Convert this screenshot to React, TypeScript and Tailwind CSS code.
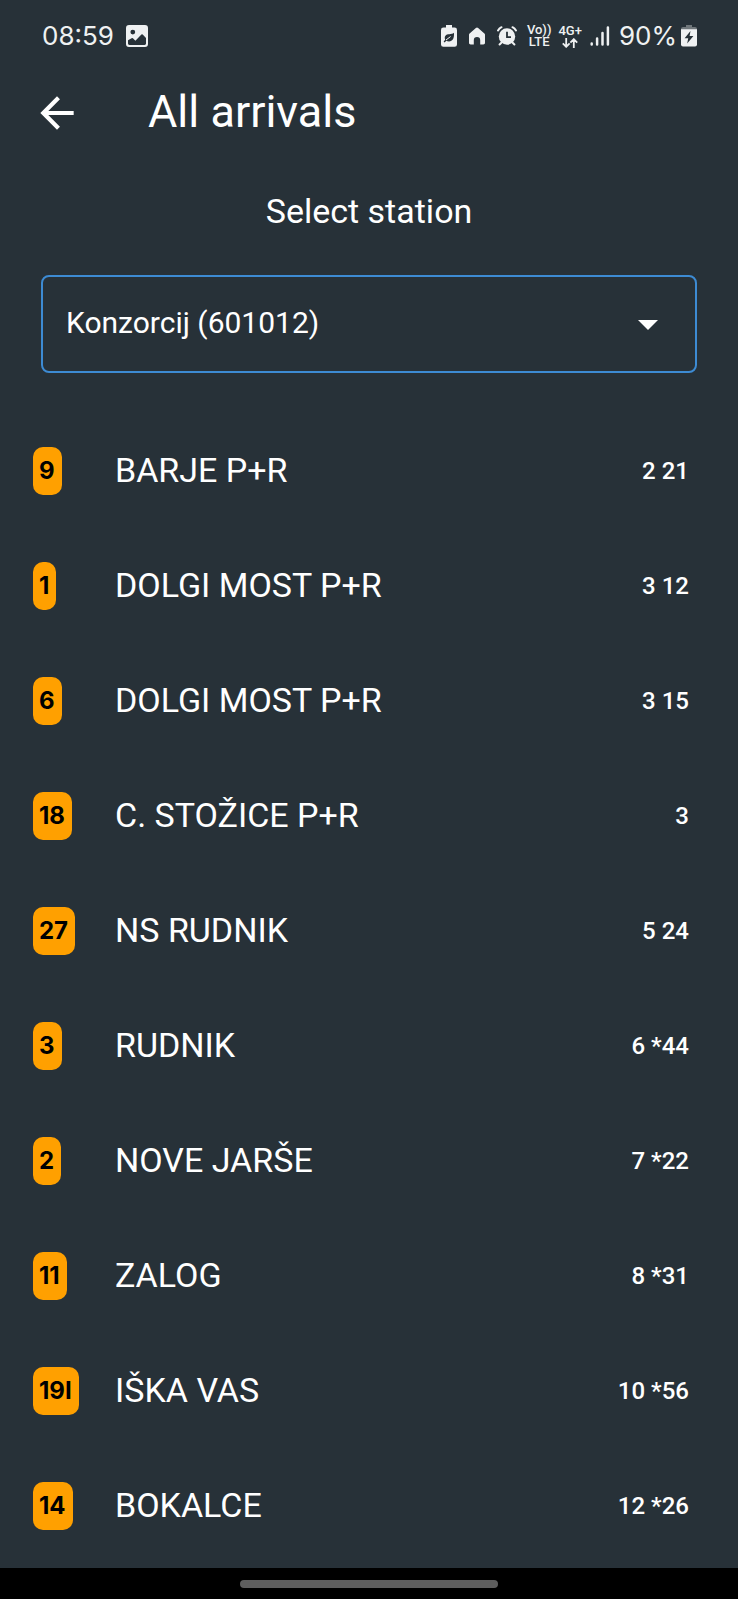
import { MdArrowBack, MdArrowDropDown } from "react-icons/md";

type Arrival = { line: string; destination: string; minutes: string };

const arrivals: Arrival[] = [
  { line: "9", destination: "BARJE P+R", minutes: "2 21" },
  { line: "1", destination: "DOLGI MOST P+R", minutes: "3 12" },
  { line: "6", destination: "DOLGI MOST P+R", minutes: "3 15" },
  { line: "18", destination: "C. STOŽICE P+R", minutes: "3" },
  { line: "27", destination: "NS RUDNIK", minutes: "5 24" },
  { line: "3", destination: "RUDNIK", minutes: "6 *44" },
  { line: "2", destination: "NOVE JARŠE", minutes: "7 *22" },
  { line: "11", destination: "ZALOG", minutes: "8 *31" },
  { line: "19I", destination: "IŠKA VAS", minutes: "10 *56" },
  { line: "14", destination: "BOKALCE", minutes: "12 *26" },
];

function PictureIcon() {
  return (
    <svg viewBox="0 0 22 22" className="size-[22px]" aria-hidden="true">
      <path
        fill="currentColor"
        fillRule="evenodd"
        d="M3 0h16a3 3 0 0 1 3 3v16a3 3 0 0 1-3 3H3a3 3 0 0 1-3-3V3a3 3 0 0 1 3-3ZM6.8 4.7a2.4 2.4 0 1 0 0 4.8 2.4 2.4 0 0 0 0-4.8ZM2 15.2v3.3c0 .8.6 1.4 1.4 1.4h15.2c.8 0 1.4-.6 1.4-1.4V13l-3.3-3.4a.9.9 0 0 0-1.3 0l-6 6.1-2.5-2.4a.9.9 0 0 0-1.3 0Z"
      />
    </svg>
  );
}

function BatteryLeafIcon() {
  return (
    <svg viewBox="0 0 16 22" className="h-[22px] w-4" aria-hidden="true">
      <path
        fill="currentColor"
        d="M5 0h6v2.6h2.6A2.4 2.4 0 0 1 16 5v14.4a2.4 2.4 0 0 1-2.4 2.4H2.4A2.4 2.4 0 0 1 0 19.4V5a2.4 2.4 0 0 1 2.4-2.4H5Z"
      />
      <path
        fill="#273138"
        d="M13 7.8c.3 5.4-1.3 8.7-5 8.7-1.1 0-2-.3-2.7-.8l-1.700 1.800-1-1 1.600-1.700C2.800 11 5 9.200 8.200 9.200c2 0 3.500-.3 4.800-1.400Z"
      />
      <path fill="none" stroke="currentColor" d="m5 15 4.600-3.500" />
    </svg>
  );
}

function HomeIcon() {
  return (
    <svg viewBox="0 0 18 18" className="size-[18px]" aria-hidden="true">
      <path
        fill="currentColor"
        d="M7.9.9a1.7 1.7 0 0 1 2.2 0l6.3 5.5c.4.4.6.8.6 1.3v8.1c0 1-.7 1.7-1.7 1.700h-3.100v-4.300a3.200 3.200 0 0 0-6.400 0v4.300H2.700c-1 0-1.700-.7-1.700-1.700V7.700c0-.5.2-1 .6-1.300Z"
      />
    </svg>
  );
}

function AlarmIcon() {
  return (
    <svg viewBox="0 0 20 20" className="size-5" aria-hidden="true">
      <circle cx="10" cy="10.5" r="8.2" fill="currentColor" />
      <path
        fill="none"
        stroke="currentColor"
        strokeWidth="2"
        strokeLinecap="round"
        d="M1 4.500A9 9 0 0 1 4.500 1.200M19 4.500a9 9 0 0 0-3.500-3.300M4.600 16.500l-2 2M15.400 16.500l2 2"
      />
      <path fill="none" stroke="#273138" strokeWidth="1.8" d="M10 5.800v5.400h4" />
    </svg>
  );
}

function DataArrowsIcon() {
  return (
    <svg viewBox="0 0 16 10" className="h-[10px] w-4" aria-hidden="true">
      <path
        fill="none"
        stroke="currentColor"
        strokeWidth="1.8"
        d="M4.200 0v8.600M.8 5.300l3.400 3.500 3.400-3.500M11.800 10V1.400M8.400 4.700l3.400-3.500 3.400 3.500"
      />
    </svg>
  );
}

function SignalIcon() {
  return (
    <svg viewBox="0 0 20 20" className="size-5" aria-hidden="true">
      <path
        fill="none"
        stroke="currentColor"
        strokeWidth="2.5"
        strokeLinecap="round"
        d="M1.700 17.500v1M7.100 12.500v6M12.500 7v11.500M17.900 1.500v17"
      />
    </svg>
  );
}

function ChargingIcon() {
  return (
    <svg viewBox="0 0 16 22" className="h-[22px] w-4" aria-hidden="true">
      <path fill="#70777b" d="M5 0h6v2h3a2 2 0 0 1 2 2v1H0V4a2 2 0 0 1 2-2h3Z" />
      <path fill="currentColor" d="M0 4.300h16v15.200a2 2 0 0 1-2 2H2a2 2 0 0 1-2-2Z" />
      <path fill="#273138" d="M9.500 6 3.600 13.200h3.600L6.200 18.400l6.200-7.300H8.600Z" />
    </svg>
  );
}

function StatusBar() {
  return (
    <div className="flex h-[72px] items-center justify-between pr-[41px] pl-[42px] font-[Inter,sans-serif] text-[26px] leading-8 text-[#eff1f2]">
      <div className="flex items-center gap-3">
        <span>08:59</span>
        <PictureIcon />
      </div>
      <div className="flex items-center">
        <div className="flex items-center gap-[11px]">
          <BatteryLeafIcon />
          <HomeIcon />
          <AlarmIcon />
        </div>
        <div className="mr-2 ml-[10px] flex items-center gap-[7px] font-[Roboto,sans-serif] text-[13px] leading-[12px] font-medium">
          <div className="flex flex-col items-center">
            <span>Vo))</span>
            <span>LTE</span>
          </div>
          <div className="flex flex-col items-center gap-px">
            <span>4G+</span>
            <DataArrowsIcon />
          </div>
        </div>
        <div className="flex items-center gap-[9px]">
          <SignalIcon />
          <div className="flex items-center gap-1">
            <span>90%</span>
            <ChargingIcon />
          </div>
        </div>
      </div>
    </div>
  );
}

export default function App() {
  return (
    <div className="flex min-h-screen flex-col bg-[#273138] font-[Roboto,sans-serif] text-white">
      <StatusBar />

      <header className="flex h-[82px] items-center gap-[66px] pl-8">
        <button type="button" aria-label="Back">
          <MdArrowBack className="size-[50px]" />
        </button>
        <h1 className="pb-0.5 text-[45px] leading-[52px]">All arrivals</h1>
      </header>

      <main className="flex grow flex-col">
        <label htmlFor="station" className="pt-[37px] text-center text-[34px] leading-10">
          Select station
        </label>
        <div className="relative mx-[41px] mt-11">
          <select
            id="station"
            className="h-[98px] w-full appearance-none rounded-lg border-2 border-[#3d8bd3] bg-transparent pr-20 pb-1 pl-[23px] text-[30px] outline-none"
          >
            <option>Konzorcij (601012)</option>
          </select>
          <MdArrowDropDown className="pointer-events-none absolute top-1/2 right-[25px] size-12 -translate-y-1/2" />
        </div>

        <table aria-label="Arrivals" className="mt-10 w-full">
          <tbody>
            {arrivals.map((arrival) => (
              <tr key={arrival.line} className="h-[115px]">
                <td className="w-[115px] pl-[33px]">
                  <span className="inline-flex h-12 items-center rounded-[10px] bg-[#ffa000] pr-[7px] pl-1.5 align-middle font-[Inter,sans-serif] text-[24px] leading-none font-bold text-black">
                    {arrival.line}
                  </span>
                </td>
                <th scope="row" className="pb-0.5 text-left text-[34px] leading-10 font-normal">
                  {arrival.destination}
                </th>
                <td className="pr-[49px] text-right text-[24px] leading-8 font-medium">
                  {arrival.minutes}
                </td>
              </tr>
            ))}
          </tbody>
        </table>
      </main>

      <footer className="mt-auto flex h-[31px] justify-center bg-black pt-3">
        <div className="h-2 w-[35%] rounded-full bg-[#5e5e5e]" />
      </footer>
    </div>
  );
}
